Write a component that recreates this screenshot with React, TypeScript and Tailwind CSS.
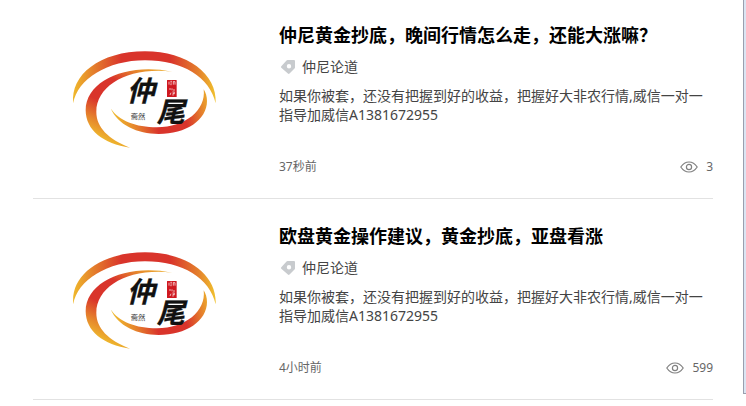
const posts = [
  {
    id: 1,
    title: '仲尼黄金抄底，晚间行情怎么走，还能大涨嘛？',
    tag: '仲尼论道',
    summary: '如果你被套，还没有把握到好的收益，把握好大非农行情,威信一对一指导加威信A1381672955',
    time: '37秒前',
    views: 3,
  },
  {
    id: 2,
    title: '欧盘黄金操作建议，黄金抄底，亚盘看涨',
    tag: '仲尼论道',
    summary: '如果你被套，还没有把握到好的收益，把握好大非农行情,威信一对一指导加威信A1381672955',
    time: '4小时前',
    views: 599,
  },
]

function Logo({ id }: { id: string }) {
  return (
    <svg viewBox="0 0 510 360" className="h-[120px] w-[170px]" role="img" aria-label="仲尾">
      <defs>
        <linearGradient id={`${id}-top`} gradientUnits="userSpaceOnUse" x1="40" y1="0" x2="467" y2="0">
          <stop offset="0" stopColor="#efb82b" />
          <stop offset="0.14" stopColor="#e4802c" />
          <stop offset="0.34" stopColor="#d9342b" />
          <stop offset="0.68" stopColor="#d9342b" />
          <stop offset="0.88" stopColor="#e4802c" />
          <stop offset="1" stopColor="#f0c22e" />
        </linearGradient>
        <linearGradient id={`${id}-left`} gradientUnits="userSpaceOnUse" x1="310" y1="60" x2="170" y2="350">
          <stop offset="0" stopColor="#f0c22e" />
          <stop offset="0.2" stopColor="#e6872c" />
          <stop offset="0.36" stopColor="#d9342b" />
          <stop offset="0.6" stopColor="#d9342b" />
          <stop offset="0.78" stopColor="#e6872c" />
          <stop offset="0.94" stopColor="#f0c22e" />
        </linearGradient>
        <linearGradient id={`${id}-bottom`} gradientUnits="userSpaceOnUse" x1="152" y1="230" x2="455" y2="160">
          <stop offset="0" stopColor="#f0c22e" />
          <stop offset="0.2" stopColor="#e6872c" />
          <stop offset="0.42" stopColor="#d9342b" />
          <stop offset="0.7" stopColor="#d9342b" />
          <stop offset="0.88" stopColor="#e6872c" />
          <stop offset="1" stopColor="#f0c22e" />
        </linearGradient>
      </defs>
      <path
        fill={`url(#${id}-top)`}
        d="M40 190C30 105 120 34 255 34C382 34 472 102 467 190C450 112 368 61 255 61C143 61 52 117 40 190Z"
      />
      <path
        fill={`url(#${id}-left)`}
        d="M337 95C205 67 77 119 77 211C77 270 130 312 210 323C145 297 109 262 109 215C109 137 205 80 337 95Z"
      />
      <path
        fill={`url(#${id}-bottom)`}
        d="M152 205C173 255 232 282 296 282C378 282 441 240 441 183C441 170 437 157 431 148C439 211 375 262 291 262C228 262 176 243 152 205Z"
      />
      <g fill="#111" stroke="#111" className="font-['Noto_Sans_CJK_SC',sans-serif] font-bold italic">
        <text x="200" y="184" fontSize="84">仲</text>
        <text x="290" y="245" fontSize="84">尾</text>
      </g>
      <text x="212" y="237" fontSize="22" fill="#333" className="font-['Noto_Sans_CJK_SC',sans-serif]">
        斋然
      </text>
      <rect x="321" y="120" width="29" height="51" rx="1" fill="#cf1820" />
      <path
        fill="none"
        stroke="#fff"
        strokeWidth="2"
        d="M327 125v9M331 124h5M331 129h5M331 134h4M340 124v10M340 125h5v9M327 147h6M336 145v6M339 150h6M333 158l-3 7M337 156h7l-5 5v6M339 161h6"
      />
    </svg>
  )
}

function TagIcon() {
  return (
    <svg viewBox="0 0 16 16" className="size-4" aria-hidden>
      <path
        fill="#c8cbce"
        fillRule="evenodd"
        d="M7.500 1H14q1 0 1 1v6.500q0 .6-.5 1.100l-5 5q-.8.7-1.600 0L1.300 8.700q-.7-.7 0-1.400L6.500 1.500Q7 1 7.500 1ZM9 5a2.200 2.200 0 1 0 0 4.400A2.200 2.200 0 0 0 9 5Z"
      />
    </svg>
  )
}

function EyeIcon() {
  return (
    <svg viewBox="0 0 18 12" className="h-3 w-[18px]" fill="none" stroke="#808080" strokeWidth="1.200" aria-hidden>
      <path d="M.8 6C3 2.700 5.700 1 9 1s6 1.700 8.200 5C15 9.300 12.300 11 9 11S3 9.300.8 6Z" />
      <circle cx="9" cy="6" r="2.600" />
    </svg>
  )
}

export default function App() {
  return (
    <div className="flex min-h-screen bg-white font-['Noto_Sans','Noto_Sans_CJK_SC',sans-serif] text-[#444]">
      <main lang="zh-CN" className="-mt-0.5 min-w-0 flex-1 pl-[33px] pr-[30px]">
        {posts.map((post) => (
          <article key={post.id} className="flex border-b border-[#e2e2e2] pb-[23px] pt-6">
            <a href="#" className="w-[246px] shrink-0 pl-[27px] pt-[18px]">
              <Logo id={`logo-${post.id}`} />
            </a>
            <div className="min-w-0 flex-1">
              <h2 className="text-lg/[26px] font-bold text-black">
                <a href="#">{post.title}</a>
              </h2>
              <div className="mt-[9px] flex items-center gap-1.5 pl-px text-sm/[20px]">
                <TagIcon />
                <a href="#">{post.tag}</a>
              </div>
              <p className="mt-[9px] text-sm/[19px]">{post.summary}</p>
              <div className="mt-[35px] flex items-center justify-between text-xs/[16px] text-[#666]">
                <time>{post.time}</time>
                <span className="flex items-center gap-2">
                  <EyeIcon />
                  {post.views}
                </span>
              </div>
            </div>
          </article>
        ))}
      </main>
      <div className="mb-3 w-[3px] border-b border-l border-[#9a9fae] bg-[#dbe5f3]" />
    </div>
  )
}
